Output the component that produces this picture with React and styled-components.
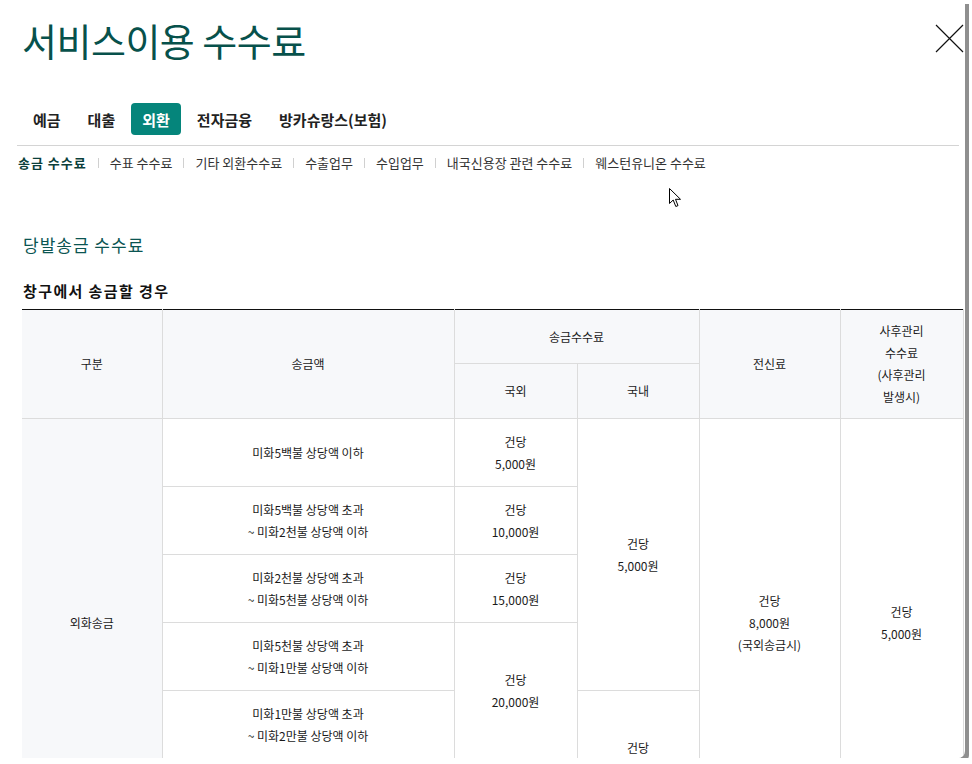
import React from 'react';
import styled, { createGlobalStyle } from 'styled-components';

const GlobalStyle = createGlobalStyle`
  html, body {
    margin: 0;
    padding: 0;
    background: #fff;
  }
  body {
    font-family: 'Noto Sans CJK KR', 'Noto Sans', sans-serif;
    color: #222;
  }
`;

const Popup = styled.div`
  position: relative;
  width: 965px;
  height: 758px;
  overflow: hidden;
  background: #fff;
  box-shadow: 4px 4px 0 #8f8f8f;
  border-bottom-right-radius: 7px;
`;

const Header = styled.div`
  display: flex;
  justify-content: space-between;
  align-items: center;
  padding: 18px 1px 0 22px;
`;

const Title = styled.h1`
  margin: 0;
  font-size: 38px;
  line-height: 44px;
  font-weight: 400;
  letter-spacing: -0.5px;
  color: #07514b;
`;

const CloseButton = styled.button`
  display: flex;
  margin-top: -4px;
  padding: 0;
  border: 0;
  background: none;
  cursor: pointer;
`;

const TabBar = styled.ul`
  display: flex;
  gap: 5px;
  list-style: none;
  margin: 41px 6px 0 17px;
  padding: 0 0 10px 5px;
  border-bottom: 1px solid #d4d4d4;
`;

const Tab = styled.li`
  height: 32px;
  padding: 0 11px;
  display: flex;
  align-items: center;
  font-size: 15px;
  font-weight: 700;
  letter-spacing: 0;
  border-radius: 4px;
  color: ${({ $active }) => ($active ? '#fff' : '#222')};
  background: ${({ $active }) => ($active ? '#05857b' : 'transparent')};
`;

const SubTabs = styled.ul`
  display: flex;
  list-style: none;
  margin: 0;
  padding: 8px 0 0 18px;
`;

const SubTab = styled.li`
  display: flex;
  align-items: center;
  font-size: 13px;
  line-height: 18px;
  color: ${({ $active }) => ($active ? '#0b3f3b' : '#333')};
  font-weight: ${({ $active }) => ($active ? 700 : 400)};
  letter-spacing: ${({ $active }) => ($active ? '1px' : '0')};

  &:not(:first-child)::before {
    content: '';
    width: 1px;
    height: 10px;
    margin: 0 11px;
    background: #d0d0d0;
  }
`;

const Section = styled.div`
  padding: 0 2px 0 22px;
`;

const SectionTitle = styled.h2`
  margin: 61px 0 0 1px;
  font-size: 17px;
  line-height: 24px;
  font-weight: 400;
  letter-spacing: 1px;
  color: #0b5552;
`;

const SubTitle = styled.h3`
  margin: 23px 0 7px 1px;
  font-size: 15px;
  line-height: 22px;
  font-weight: 700;
  letter-spacing: 1.4px;
  color: #111;
`;

const Table = styled.table`
  width: 941px;
  table-layout: fixed;
  border-collapse: collapse;
  border-top: 1px solid #111;
  font-size: 12px;
  line-height: 22px;
  color: #1a1a1a;
`;

const Row = styled.tr`
  height: ${({ $h }) => $h}px;
`;

const Th = styled.th`
  font-weight: 400;
  background: #f7f8fa;
  border: 1px solid #dcdcdc;
  border-top: 0;
  padding: 0 4px;
  text-align: center;
  vertical-align: middle;

  &:first-child {
    border-left: 0;
  }
`;

const Td = styled.td`
  background: ${({ $gray }) => ($gray ? '#f7f8fa' : '#fff')};
  border: 1px solid #dcdcdc;
  padding: 0 4px;
  text-align: center;
  vertical-align: middle;

  &:first-child {
    border-left: 0;
  }
`;

const Cursor = styled.svg`
  position: absolute;
  left: 669px;
  top: 188px;
`;

const tabs = ['예금', '대출', '외환', '전자금융', '방카슈랑스(보험)'];
const subTabs = [
  '송금 수수료',
  '수표 수수료',
  '기타 외환수수료',
  '수출업무',
  '수입업무',
  '내국신용장 관련 수수료',
  '웨스턴유니온 수수료',
];

const amounts = [
  ['미화5백불 상당액 이하'],
  ['미화5백불 상당액 초과', '~ 미화2천불 상당액 이하'],
  ['미화2천불 상당액 초과', '~ 미화5천불 상당액 이하'],
  ['미화5천불 상당액 초과', '~ 미화1만불 상당액 이하'],
  ['미화1만불 상당액 초과', '~ 미화2만불 상당액 이하'],
  ['미화2만불 상당액 초과'],
];

const Lines = ({ items }) =>
  items.map((t, i) => (
    <React.Fragment key={i}>
      {i > 0 && <br />}
      {t}
    </React.Fragment>
  ));

export default function App() {
  return (
    <>
      <GlobalStyle />
      <Popup>
        <Header>
          <Title>서비스이용 수수료</Title>
          <CloseButton aria-label='닫기'>
            <svg width='29' height='29' viewBox='0 0 29 29'>
              <path d='M1 1 L28 28 M28 1 L1 28' stroke='#111' strokeWidth='1.2' fill='none' />
            </svg>
          </CloseButton>
        </Header>

        <TabBar>
          {tabs.map(t => (
            <Tab key={t} $active={t === '외환'}>
              {t}
            </Tab>
          ))}
        </TabBar>

        <SubTabs>
          {subTabs.map((t, i) => (
            <SubTab key={t} $active={i === 0}>
              {t}
            </SubTab>
          ))}
        </SubTabs>

        <Section>
          <SectionTitle>당발송금 수수료</SectionTitle>
          <SubTitle>창구에서 송금할 경우</SubTitle>
          <Table>
            <colgroup>
              <col style={{ width: 140 }} />
              <col style={{ width: 292 }} />
              <col style={{ width: 123 }} />
              <col style={{ width: 122 }} />
              <col style={{ width: 141 }} />
              <col style={{ width: 123 }} />
            </colgroup>
            <thead>
              <Row $h={54}>
                <Th rowSpan={2}>구분</Th>
                <Th rowSpan={2}>송금액</Th>
                <Th colSpan={2}>송금수수료</Th>
                <Th rowSpan={2}>전신료</Th>
                <Th rowSpan={2}>
                  <Lines items={['사후관리', '수수료', '(사후관리', '발생시)']} />
                </Th>
              </Row>
              <Row $h={55}>
                <Th>국외</Th>
                <Th>국내</Th>
              </Row>
            </thead>
            <tbody>
              <Row $h={68}>
                <Td rowSpan={6} $gray>외화송금</Td>
                <Td><Lines items={amounts[0]} /></Td>
                <Td><Lines items={['건당', '5,000원']} /></Td>
                <Td rowSpan={4}><Lines items={['건당', '5,000원']} /></Td>
                <Td rowSpan={6}><Lines items={['건당', '8,000원', '(국외송금시)']} /></Td>
                <Td rowSpan={6}><Lines items={['건당', '5,000원']} /></Td>
              </Row>
              <Row $h={68}>
                <Td><Lines items={amounts[1]} /></Td>
                <Td><Lines items={['건당', '10,000원']} /></Td>
              </Row>
              <Row $h={68}>
                <Td><Lines items={amounts[2]} /></Td>
                <Td><Lines items={['건당', '15,000원']} /></Td>
              </Row>
              <Row $h={68}>
                <Td><Lines items={amounts[3]} /></Td>
                <Td rowSpan={2}><Lines items={['건당', '20,000원']} /></Td>
              </Row>
              <Row $h={68}>
                <Td><Lines items={amounts[4]} /></Td>
                <Td rowSpan={2}><Lines items={['건당', '10,000원']} /></Td>
              </Row>
              <Row $h={68}>
                <Td><Lines items={amounts[5]} /></Td>
                <Td><Lines items={['건당', '25,000원']} /></Td>
              </Row>
            </tbody>
          </Table>
        </Section>

        <Cursor width='13' height='20' viewBox='0 0 13 20'>
          <path
            d='M0.5 0.5 L0.5 15.5 L4.2 12 L6.8 18.5 L9 17.6 L6.5 11.3 L11.5 11.3 Z'
            fill='#fff'
            stroke='#000'
            strokeWidth='1'
          />
        </Cursor>
      </Popup>
    </>
  );
}
